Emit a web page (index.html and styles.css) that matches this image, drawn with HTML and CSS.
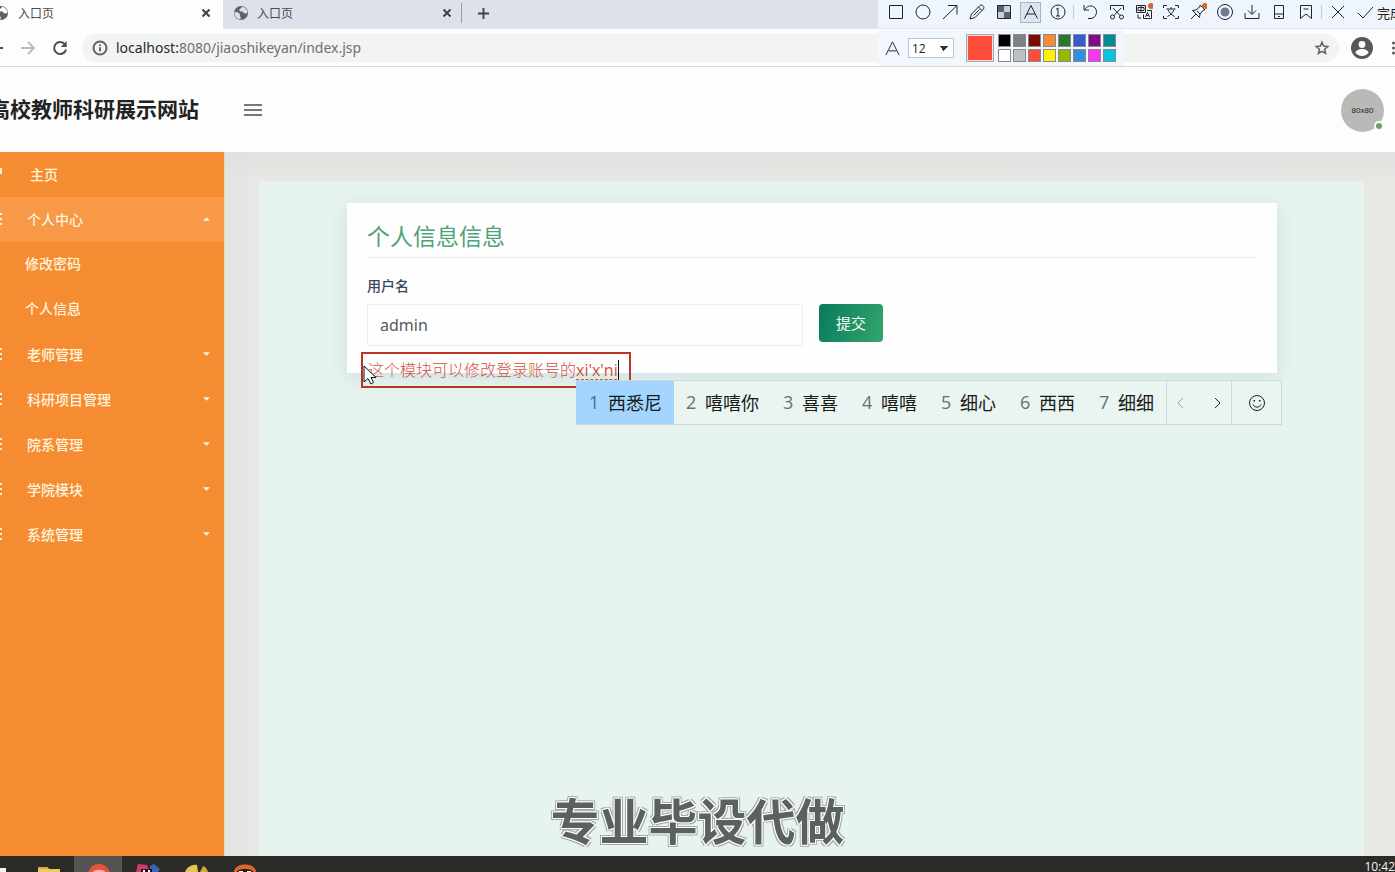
FILE: index.html
```html
<!DOCTYPE html>
<html lang="zh-CN">
<head>
<meta charset="utf-8">
<title>入口页</title>
<link rel="stylesheet" href="styles.css">
</head>
<body>
<div class="screen">
  <div class="tabs">
    <div class="tab tab-active">
      <svg class="globe" viewBox="0 0 16 16"><circle cx="8" cy="8" r="7" fill="#5f6368"/><path d="M1.500 7l3 .3 2.500 1.700-.3 2 1 1-.2 2.500A6.500 6.500 0 0 1 1.500 7zM8 3l1.500-1.300c2.500.6 4.500 2.800 5 5.300l-1 1.500-3-.5-.5-1.500L7.500 6.500 6 5z" fill="#fdfdfd"/></svg>
      <span class="tab-name">入口页</span>
      <button class="tab-btn" aria-label="关闭"><svg viewBox="0 0 10 10"><path d="M1.500 1.500l7 7m0-7l-7 7"/></svg></button>
    </div>
    <div class="tab tab-idle">
      <svg class="globe" viewBox="0 0 16 16"><circle cx="8" cy="8" r="7" fill="#5f6368"/><path d="M1.500 7l3 .3 2.500 1.700-.3 2 1 1-.2 2.500A6.500 6.500 0 0 1 1.500 7zM8 3l1.500-1.300c2.500.6 4.500 2.800 5 5.300l-1 1.500-3-.5-.5-1.500L7.500 6.500 6 5z" fill="#dee1e9"/></svg>
      <span class="tab-name">入口页</span>
      <button class="tab-btn" aria-label="关闭"><svg viewBox="0 0 10 10"><path d="M1.500 1.500l7 7m0-7l-7 7"/></svg></button>
    </div>
    <button class="new-tab" aria-label="新标签页"><svg viewBox="0 0 14 14"><path d="M7 1v12M1 7h12"/></svg></button>
  </div>

  <div class="browser-bar">
    <button class="nav back" aria-label="后退"><svg viewBox="0 0 16 16"><path d="M15 8H2M8 2L2 8l6 6" stroke="#4c4f53"/></svg></button>
    <button class="nav" aria-label="前进"><svg viewBox="0 0 16 16"><path d="M1 8h13M8 2l6 6-6 6" stroke="#b9bbbd"/></svg></button>
    <button class="nav" aria-label="刷新"><svg viewBox="0 0 16 16"><path d="M13 4.500A6 6 0 1 0 14 9.500" stroke="#4c4f53"/><path d="M14.700 1v6h-6z" fill="#4c4f53"/></svg></button>
    <div class="address">
      <svg class="info" viewBox="0 0 16 16"><circle cx="8" cy="8" r="6.500"/><path d="M8 7.200v4M8 4.500v1.500"/></svg>
      <span class="url"><b>localhost:</b>8080/jiaoshikeyan/index.jsp</span>
      <svg class="star" viewBox="0 0 16 16"><path d="M8 2.200l1.600 3.900 4.200.4-3.200 2.800 1 4.200L8 11.300l-3.600 2.200 1-4.200-3.200-2.800 4.200-.4z"/></svg>
    </div>
    <svg class="account" viewBox="0 0 22 22"><circle cx="11" cy="11" r="11" fill="#55585c"/><circle cx="11" cy="7.500" r="3.400" fill="#fdfdfd"/><path d="M4.300 15.500c1.400-2.600 4-3.400 6.700-3.400s5.300.8 6.700 3.400c-1.500 2.200-4 3.400-6.700 3.400s-5.200-1.200-6.700-3.400z" fill="#fdfdfd"/></svg>
    <svg class="dots" viewBox="0 0 4 16"><circle cx="2.500" cy="3" r="1.500"/><circle cx="2.500" cy="8" r="1.500"/><circle cx="2.500" cy="13" r="1.500"/></svg>
  </div>

  <header class="site-head">
    <h1>高校教师科研展示网站</h1>
    <button class="menu-toggle" aria-label="菜单"><svg viewBox="0 0 18 14"><path d="M0 2h18M0 7h18M0 12h18"/></svg></button>
    <div class="avatar">80x80<i></i></div>
  </header>

  <div class="body-row">
    <nav class="side">
      <a class="item home" href="#"><svg class="lead" viewBox="0 0 14 14"><path d="M1 6l6-4h6v5M3 6v7h8"/></svg>主页</a>
      <a class="item open" href="#"><svg class="lead" viewBox="0 0 14 14"><path d="M1 2h13M1 7h13M1 12h13"/></svg>个人中心<svg class="caret" viewBox="0 0 8 4"><path d="M0 4l4-4 4 4z"/></svg></a>
      <a class="item sub" href="#">修改密码</a>
      <a class="item sub" href="#">个人信息</a>
      <a class="item" href="#"><svg class="lead" viewBox="0 0 14 14"><path d="M1 2h13M1 7h13M1 12h13"/></svg>老师管理<svg class="caret" viewBox="0 0 8 4"><path d="M0 0l4 4 4-4z"/></svg></a>
      <a class="item" href="#"><svg class="lead" viewBox="0 0 14 14"><path d="M1 2h13M1 7h13M1 12h13"/></svg>科研项目管理<svg class="caret" viewBox="0 0 8 4"><path d="M0 0l4 4 4-4z"/></svg></a>
      <a class="item" href="#"><svg class="lead" viewBox="0 0 14 14"><path d="M1 2h13M1 7h13M1 12h13"/></svg>院系管理<svg class="caret" viewBox="0 0 8 4"><path d="M0 0l4 4 4-4z"/></svg></a>
      <a class="item" href="#"><svg class="lead" viewBox="0 0 14 14"><path d="M1 2h13M1 7h13M1 12h13"/></svg>学院模块<svg class="caret" viewBox="0 0 8 4"><path d="M0 0l4 4 4-4z"/></svg></a>
      <a class="item" href="#"><svg class="lead" viewBox="0 0 14 14"><path d="M1 2h13M1 7h13M1 12h13"/></svg>系统管理<svg class="caret" viewBox="0 0 8 4"><path d="M0 0l4 4 4-4z"/></svg></a>
    </nav>
    <main class="content">
      <div class="panel">
        <form class="card">
          <h2>个人信息信息</h2>
          <label for="user">用户名</label>
          <div class="row">
            <input id="user" type="text" value="admin">
            <button type="button" class="submit">提交</button>
          </div>
        </form>
      </div>
    </main>
  </div>

  <footer class="taskbar">
    <span class="app"><svg viewBox="0 0 48 16"><path d="M0 12h6v4H0z" fill="#f4f4f4"/></svg></span>
    <span class="app"><svg viewBox="0 0 48 16"><path d="M12 11h9l2 2h11v3H12z" fill="#f0cb60"/><path d="M12 11h9l2 2H12z" fill="#d9a93b"/></svg></span>
    <span class="app app-on"><svg viewBox="0 0 48 16"><circle cx="25" cy="19" r="11" fill="#e5543f"/><path d="M19 16c1-3 11-3 12 0z" fill="#f5b9aa"/></svg></span>
    <span class="app"><svg viewBox="0 0 48 16"><path d="M14 16l2-8 9 1 3 7z" fill="#d23b62"/><path d="M28 10l4-2 6 5-2 3h-8z" fill="#3c62b5"/><path d="M19 13h11v3H19z" fill="#1a1420"/><path d="M21 14h2v2h-2zM26 14h2v2h-2z" fill="#fff"/></svg></span>
    <span class="app"><svg viewBox="0 0 48 16"><path d="M15 16c2-5 7-8 12-7l1 7z" fill="#e4c452"/><path d="M30 16l3-6c3 1 4 3 5 6z" fill="#cfa93c"/></svg></span>
    <span class="app"><svg viewBox="0 0 48 16"><path d="M16 16c0-10 22-10 22 0z" fill="#d8682e"/><path d="M19 16c1-4 15-4 16 0z" fill="#201611"/><path d="M21 15h4v1h-4zM29 15h4v1h-4z" fill="#fff"/></svg></span>
    <time>10:42</time>
  </footer>

  <div class="snip">
    <div class="tools">
      <button aria-label="矩形"><svg viewBox="0 0 18 18"><path d="M2.500 2.500h13v13h-13z"/></svg></button>
      <button aria-label="椭圆"><svg viewBox="0 0 18 18"><circle cx="9" cy="9" r="7"/></svg></button>
      <button aria-label="箭头"><svg viewBox="0 0 18 18"><path d="M2 16L16 2.500M7 2.500h9v9"/></svg></button>
      <button aria-label="画笔"><svg viewBox="0 0 18 18"><path d="M2 16l1.500-5L12 2.500c2-1.500 5 1 3.500 3.500L7 14.500zM10.500 4l3.500 3.500M5.500 12.500l6-6"/></svg></button>
      <button aria-label="马赛克"><svg viewBox="0 0 18 18"><path d="M3 3h6v6H3zM9 9h6v6H9z" fill="#5b6373" stroke="none"/><path d="M9 3h6v6H9zM3 9h6v6H3z" fill="#c9d0dc" stroke="none"/><path d="M2.500 2.500h13v13h-13z"/></svg></button>
      <button class="on" aria-label="文字"><svg viewBox="0 0 18 18"><path d="M2.500 15.500L9 2.500l6.500 13M5 11h8"/></svg></button>
      <button aria-label="序号"><svg viewBox="0 0 18 18"><circle cx="9" cy="9" r="7"/><path d="M7 6.500L9 5v8M7 13h4"/></svg></button>
      <span class="sep"></span>
      <button aria-label="撤销"><svg viewBox="0 0 18 18"><path d="M3 2v5h5M3.500 7c2-4 6-5 9-3.300 5 3 3.500 11-2.500 11.800H7"/></svg></button>
      <button aria-label="剪切"><svg viewBox="0 0 18 18"><path d="M2.500 7V2.500h13V7M5 5l7.500 8M13 5l-7.500 8"/><circle cx="4.500" cy="14" r="2"/><circle cx="13.500" cy="14" r="2"/></svg></button>
      <button aria-label="翻译"><svg viewBox="0 0 18 18"><path d="M1.500 2.500h9v7h-9zM3 4.500h6v3H3zM6 3v6M12 7.500h4.500v8h-8v-4M10.500 14l2-4.500 2 4.500M11.500 12.500h2M3 11.500V15h3"/><circle cx="16" cy="3" r="3" class="new"/></svg></button>
      <button aria-label="识别文字"><svg viewBox="0 0 18 18"><path d="M1.500 5V2.500H5M13 2.500h3.500V5M16.500 13v2.500H13M5 15.500H1.500V13M4.500 6h9M9 4v2M6 6.500c1 3 3 5 6.500 7M12 6.500c-1 3-3 5-6.500 7"/></svg></button>
      <button aria-label="钉住"><svg viewBox="0 0 18 18"><path d="M2 16l5-5M3.500 7.500l7 7 .5-3.500 3.500-4 1.500 0-5-5v1.500L7 7z M8 8l3 3"/><circle cx="16" cy="3" r="3" class="new"/></svg></button>
      <button aria-label="录屏"><svg viewBox="0 0 18 18"><circle cx="9" cy="9" r="7.500"/><circle cx="9" cy="9" r="4.500" fill="#707a8c" stroke="none"/></svg></button>
      <button aria-label="下载"><svg viewBox="0 0 18 18"><path d="M9 2v9M5 7.500l4 4 4-4M2 10v5.500h14V10"/></svg></button>
      <button aria-label="发送到手机"><svg viewBox="0 0 18 18"><path d="M4.500 2.500h9v13h-9zM4.500 11h9M8 13.500h2"/></svg></button>
      <button aria-label="收藏"><svg viewBox="0 0 18 18"><path d="M3.500 2.500h11v13L9 11l-5.500 4.500zM6.500 6h5"/></svg></button>
      <span class="sep"></span>
      <button aria-label="取消"><svg viewBox="0 0 18 18"><path d="M3 3l12 12M15 3L3 15"/></svg></button>
      <button class="done"><svg viewBox="0 0 18 18"><path d="M2 10l5 5L17 4"/></svg>完成</button>
    </div>
    <div class="style-bar">
      <svg class="letter" viewBox="0 0 18 18"><path d="M2 16L9 2l7 14M5 11.500h8"/></svg>
      <select aria-label="字号"><option>12</option></select>
      <span class="current"></span>
      <div class="swatches">
        <i class="c1"></i><i class="c2"></i><i class="c3"></i><i class="c4"></i><i class="c5"></i><i class="c6"></i><i class="c7"></i><i class="c8"></i>
        <i class="c9"></i><i class="c10"></i><i class="c11"></i><i class="c12"></i><i class="c13"></i><i class="c14"></i><i class="c15"></i><i class="c16"></i>
      </div>
    </div>
  </div>

  <div class="note">这个模块可以修改登录账号的<span class="typing">xi'x'ni</span></div>
  <svg class="pointer" viewBox="0 0 14 20"><path d="M1 1v16l4-3.500L8 19l2.500-1.500L8 12.500h5z" fill="#fff" stroke="#111"/></svg>

  <div class="ime">
    <button class="cand picked"><span>1</span>西悉尼</button>
    <button class="cand"><span>2</span>嘻嘻你</button>
    <button class="cand"><span>3</span>喜喜</button>
    <button class="cand"><span>4</span>嘻嘻</button>
    <button class="cand"><span>5</span>细心</button>
    <button class="cand"><span>6</span>西西</button>
    <button class="cand"><span>7</span>细细</button>
    <div class="pager">
      <button class="prev" aria-label="上一页"><svg viewBox="0 0 12 12"><path d="M8 1L3 6l5 5"/></svg></button>
      <button aria-label="下一页"><svg viewBox="0 0 12 12"><path d="M4 1l5 5-5 5"/></svg></button>
    </div>
    <button class="smile" aria-label="表情"><svg viewBox="0 0 18 18"><circle cx="9" cy="9" r="7.500"/><path d="M5 10.500c1.500 3.500 6.500 3.500 8 0"/><path d="M5.500 6h1.500v1.500H5.500zM11 6h1.500v1.500H11z" fill="#222" stroke="none"/></svg></button>
  </div>

  <div class="caption">专业毕设代做</div>
</div>
</body>
</html>
```

FILE: styles.css
```css
* { box-sizing: border-box; }
body {
  margin: 0;
  font-family: "Open Sans", "Noto Sans CJK SC", sans-serif;
  overflow: hidden;
}
button { border: 0; background: none; padding: 0; font: inherit; color: inherit; }
svg { flex: none; fill: none; }
h1, h2 { margin: 0; }

.screen {
  position: relative;
  display: flex;
  flex-direction: column;
  height: 100vh;
  overflow: hidden;
  background: #fdfdfd;
}

/* browser chrome */
.tabs { display: flex; height: 29px; background: #fdfdfd linear-gradient(#dee1e9, #dee1e9) 223px 0 no-repeat; }
.tab { display: flex; align-items: center; font-size: 12px; color: #4a4d51; padding-bottom: 3px; }
.tab-active { width: 230px; margin-left: -7px; background: #fdfdfd; padding-right: 4px; }
.tab-idle {
  width: 239px;
  padding-left: 10px;
  padding-right: 9px;
  border-bottom-left-radius: 8px;
  background: linear-gradient(#9a9da3, #9a9da3) right 3px / 1px 20px no-repeat;
}
.globe { width: 16px; height: 16px; margin-right: 8px; }
.tab-active .globe { margin-right: 9px; }
.tab-name { flex: 1; }
.tab-btn { width: 10px; height: 10px; display: flex; margin-right: 8px; }
.tab-idle .tab-btn { margin-right: 1px; }
.tab-btn svg { width: 10px; stroke: #3e4145; stroke-width: 2; }
.new-tab { display: flex; align-items: center; padding: 0 0 3px 15px; }
.new-tab svg { width: 13px; height: 13px; stroke: #3e4145; stroke-width: 2; }

.browser-bar {
  display: flex;
  align-items: center;
  height: 38px;
  border-bottom: 1px solid #d9dadb;
}
.nav { display: flex; width: 16px; margin-right: 16px; }
.nav svg { width: 16px; height: 16px; stroke-width: 2; }
.back { margin-left: -12px; }
.address {
  flex: 1;
  display: flex;
  align-items: center;
  height: 28px;
  margin-right: 12px;
  margin-left: -2px;
  padding: 0 9px 0 10px;
  border-radius: 14px;
  background: #f2f4f3;
}
.info { width: 16px; height: 16px; stroke: #5f6368; stroke-width: 2; }
.url { flex: 1; margin-left: 8px; font: 14px "Noto Sans", sans-serif; color: #6c6f73; }
.url b { font-weight: 400; color: #27292c; }
.star { width: 16px; height: 16px; stroke: #5f6368; stroke-width: 1.5; }
.account { width: 22px; height: 22px; margin-right: 18px; }
.dots { width: 4px; height: 16px; fill: #55585c; }

/* site header */
.site-head {
  display: flex;
  align-items: center;
  height: 85px;
  padding-top: 1px;
  font-family: "Noto Sans CJK SC", sans-serif;
}
.site-head h1 { margin-left: -11px; padding-bottom: 4px; font-size: 21px; line-height: 32px; color: #222; white-space: nowrap; }
.menu-toggle { display: flex; margin-left: 45px; }
.menu-toggle svg { width: 18px; height: 14px; stroke: #777; stroke-width: 2; }
.avatar {
  position: relative;
  margin-left: auto;
  margin-right: 11px;
  width: 43px;
  height: 43px;
  border-radius: 50%;
  background: #b9bab8;
  font: 8px/43px "Liberation Sans", sans-serif;
  text-align: center;
  color: #222;
}
.avatar i {
  position: absolute;
  right: 0;
  bottom: 1px;
  width: 10px;
  height: 10px;
  border: 2px solid #fdfdfd;
  border-radius: 50%;
  background: #6f9b70;
}

/* sidebar and content */
.body-row { flex: 1; display: flex; min-height: 0; }
.side { width: 225px; background: #f68c31; border-right: 1px solid #efd5b8; }
.item {
  display: flex;
  align-items: center;
  height: 45px;
  padding-right: 14px;
  padding-bottom: 2px;
  font-size: 14px;
  font-weight: 500;
  color: #fff3dc;
  text-decoration: none;
}
.lead { width: 14px; height: 14px; margin-left: -12px; margin-right: 25px; stroke: #fff3dc; stroke-width: 2; }
.home .lead { margin-right: 28px; }
.open { background: #f79947; }
.sub { padding-left: 25px; padding-bottom: 4px; }
.caret { width: 7px; height: 4px; margin-left: auto; fill: #fff3dc; }
.content {
  flex: 1;
  display: flex;
  padding: 30px 31px 0 34px;
  background: linear-gradient(#e1e2e0, rgba(232, 233, 229, 0) 30px), linear-gradient(90deg, #e2e3e3, #e8e9e5 34px);
}
.panel { flex: 1; padding: 21px 87px 0 88px; background: #e6f3ee; }
.card {
  height: 170px;
  padding: 15px 20px 0;
  background: #fefefe;
  box-shadow: 0 4px 16px rgba(80, 110, 170, .14);
}
.card h2 {
  margin-bottom: 16px;
  border-bottom: 1px solid #e9eeee;
  padding-bottom: 3px;
  font-size: 23px;
  line-height: 36px;
  font-weight: 400;
  color: #4ea377;
}
.card label { display: block; font-size: 14px; line-height: 24px; font-weight: 500; color: #3d4759; }
.row { display: flex; align-items: flex-start; gap: 16px; margin-top: 6px; }
.row input {
  width: 49%;
  height: 42px;
  padding: 0 12px;
  border: 1px solid #e9efef;
  border-radius: 2px;
  background: #fefefe;
  font: 16px "Noto Sans", sans-serif;
  color: #555b61;
}
.submit {
  width: 64px;
  height: 38px;
  padding-bottom: 2px;
  border-radius: 4px;
  background: linear-gradient(110deg, #087a5f, #34a66b);
  color: #f3fff5;
  font-size: 15px;
}

/* task bar */
.taskbar { display: flex; height: 16px; background: #2c2b28; overflow: hidden; }
.app { width: 48px; height: 16px; }
.app:first-child { width: 26px; }
.app svg { display: block; width: 48px; height: 16px; }
.app-on { background: #545351; }
.taskbar time { margin-left: auto; font-size: 12px; line-height: 21px; color: #f1f1f1; }

/* capture tool bar over the browser */
.snip { position: absolute; top: 0; right: 0; width: 517px; color: #222; }
.tools { display: flex; align-items: center; height: 28px; padding: 0 0 4px 4px; background: #eff5fd; overflow: hidden; }
.tools button { flex: none; display: flex; align-items: center; justify-content: center; width: 27px; height: 21px; }
.tools svg { width: 18px; height: 18px; stroke: #20242c; stroke-width: 1; }
.tools .on { width: 21px; height: 21px; margin: 0 3px; border: 1px solid #a9b2c0; background: #dce4ef; }
.tools .new { fill: #d0692f; stroke: none; }
.tools .done { width: 60px; justify-content: flex-start; gap: 3px; padding-left: 5px; font-size: 13px; white-space: nowrap; }
.sep { flex: none; width: 1px; height: 14px; margin: 0 2px; background: #c5cbd4; }
.style-bar { display: flex; align-items: center; width: 246px; height: 36px; margin-top: 2px; padding-left: 6px; background: #f2f7fd; }
.letter { width: 17px; height: 17px; stroke: #20242c; }
.style-bar select {
  appearance: none;
  width: 46px;
  height: 20px;
  margin-left: 7px;
  padding: 0 3px;
  border: 1px solid #c2c6cc;
  border-radius: 0;
  background: linear-gradient(45deg, transparent 50%, #333 50%) 30px 7px / 5px 5px no-repeat, linear-gradient(-45deg, transparent 50%, #333 50%) 35px 7px / 5px 5px no-repeat, #fff;
  font: 12px "Open Sans", sans-serif;
  color: #222;
}
.current { width: 28px; height: 28px; margin: 0 4px 0 12px; border: 1px solid #a4a7ab; background: #fd4d38; box-shadow: inset 0 0 0 1px #f5dedb; }
.swatches { display: grid; grid-template-columns: repeat(8, 13px); gap: 2px; }
.swatches i { height: 13px; border: 1px solid #858991; }
.c1 { background: #000; } .c2 { background: #808080; } .c3 { background: #7e0b00; } .c4 { background: #f58b35; }
.c5 { background: #287a28; } .c6 { background: #385ad1; } .c7 { background: #850c87; } .c8 { background: #078b93; }
.c9 { background: #fff; } .c10 { background: #bfc1c1; } .c11 { background: #fd4d38; } .c12 { background: #fff200; }
.c13 { background: #99b600; } .c14 { background: #338de0; } .c15 { background: #fa36ef; } .c16 { background: #0ac4db; }

/* annotation, pointer, candidates */
.note {
  position: absolute;
  left: 361px;
  top: 352px;
  height: 36px;
  padding: 0 10px 0 5px;
  border: 2px solid #bd3327;
  font-size: 16px;
  line-height: 32px;
  font-weight: 300;
  color: #d2503f;
  white-space: nowrap;
}
.typing { display: inline-block; height: 21px; line-height: 20px; border-right: 1px solid #111; text-decoration: underline dashed 1px; text-underline-offset: 3px; font-weight: 400; }
.pointer { position: absolute; left: 363px; top: 365px; width: 14px; height: 20px; }
.ime {
  position: absolute;
  left: 576px;
  top: 380px;
  display: flex;
  height: 45px;
  border: 1px solid #cbdad9;
  border-left: 0;
  background: #eaf4f0;
  font-size: 18px;
  color: #161a1a;
}
.cand { display: flex; align-items: center; padding: 0 12px 2px; white-space: nowrap; }
.cand span { width: 19px; text-align: left; font-family: "Open Sans", sans-serif; color: #667171; }
.picked { padding-left: 13px; background: #a3d5ff; }
.picked span { color: #46718f; }
.pager { display: flex; align-items: center; gap: 24px; width: 66px; padding: 0 8px; border: solid #cbdad9; border-width: 0 1px; }
.pager svg { display: block; width: 12px; height: 12px; stroke: #222; }
.pager .prev svg { stroke: #9aa5a3; }
.smile { display: flex; align-items: center; justify-content: center; width: 49px; }
.smile svg { width: 18px; height: 18px; stroke: #222; }

.caption {
  position: absolute;
  left: 0;
  right: 0;
  bottom: 18px;
  text-align: center;
  font: 700 49px/70px "Noto Sans CJK SC", sans-serif;
  color: #5b625d;
  text-shadow: 1px 1px #fff, -1px -1px #fff, 1px -1px #fff, -1px 1px #fff, 2px 2px #a4aba7, -2px -2px #a4aba7, 2px -2px #a4aba7, -2px 2px #a4aba7;
}
```
